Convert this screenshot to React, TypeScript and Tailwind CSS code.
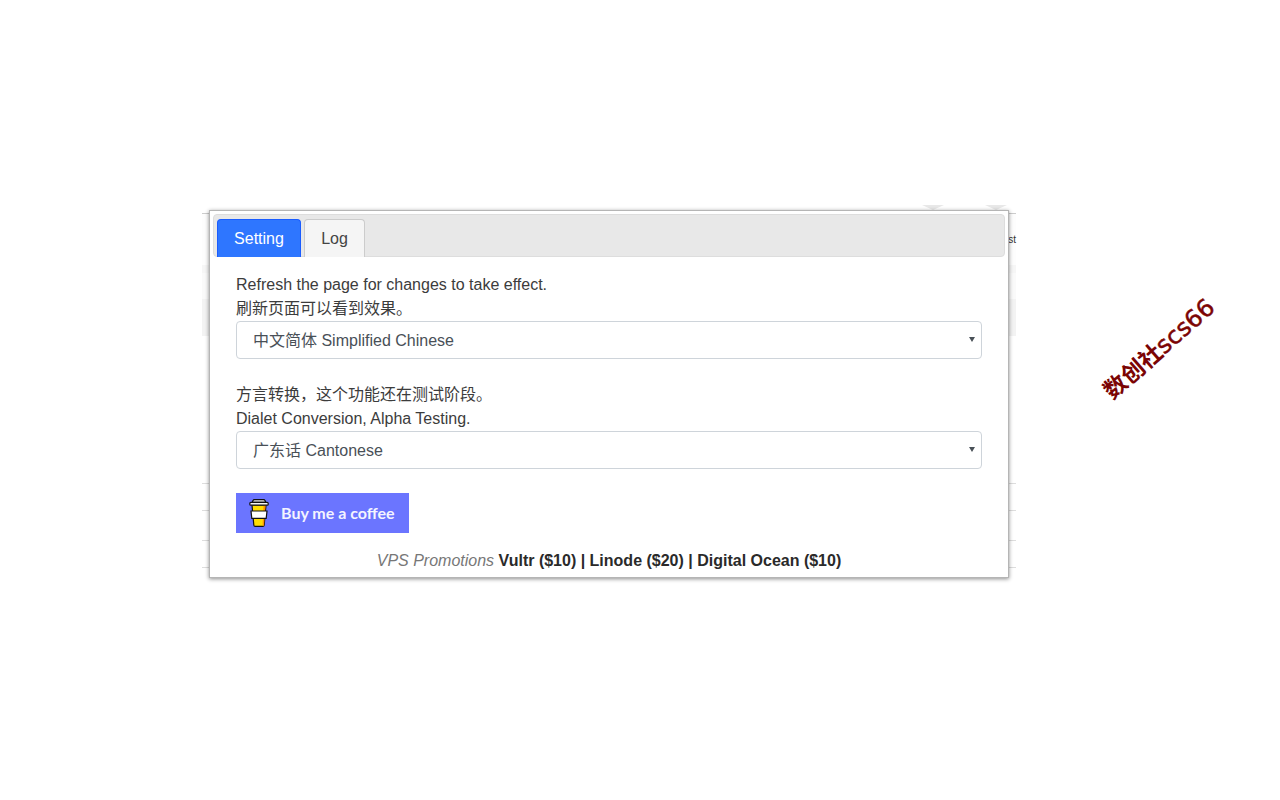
const CoffeeCup = () => (
  <svg width="20" height="28" viewBox="0 0 20 28" className="shrink-0">
    <path d="M3 6 L4.8 26 Q4.9 27.4 6.2 27.4 L13.8 27.4 Q15.1 27.4 15.2 26 L17 6 Z" fill="#ffdd00" stroke="#111" strokeWidth="1.2" />
    <path d="M14.6 6 L13.6 26.8 L15 26.8 L16.6 6 Z" fill="#ff9100" />
    <path d="M2 12 L18 12 L17.2 19.4 L2.8 19.4 Z" fill="#fff" stroke="#111" strokeWidth="1.2" />
    <path d="M3.2 3.4 L4 1.6 Q4.3 0.7 5.4 0.7 L14.6 0.7 Q15.7 0.7 16 1.6 L16.8 3.4 Z" fill="#e6e6e6" stroke="#111" strokeWidth="1.2" />
    <rect x="0.8" y="3.4" width="18.4" height="2.8" rx="1" fill="#f4f4f4" stroke="#111" strokeWidth="1.2" />
  </svg>
);

const Select = ({ value }: { value: string }) => (
  <div className="relative">
    <select className="block h-[38px] w-full appearance-none rounded border border-[#ced4da] bg-white pl-4 pt-0.5 text-[#495057]">
      <option>{value}</option>
    </select>
    <span className="pointer-events-none absolute right-[7px] top-4 border-x-[3px] border-t-[5px] border-x-transparent border-t-[#495057]" />
  </div>
);

const Backdrop = () => (
  <div className="absolute left-[202px] top-[205px] flex h-[363px] w-[814px] flex-col">
    <div className="flex h-[8px] gap-[41px] pl-[720px]">
      <div className="h-0 border-x-[11px] border-t-[5px] border-x-transparent border-t-[#e8e8e8]" />
      <div className="h-0 border-x-[11px] border-t-[5px] border-x-transparent border-t-[#e8e8e8]" />
    </div>
    <div className="flex h-[52px] items-center justify-end border-t border-[#ccc] bg-[#fdfdfd] text-[10px] text-[#333]">
      st
    </div>
    <div className="h-[8px] bg-[#f6f6f6]" />
    <div className="flex h-[63px] flex-col justify-end bg-[#fafafa]">
      <div className="h-[37px] bg-[#f3f3f3]" />
    </div>
    <div className="mt-[147px] h-[27px] border-t border-[#ddd]" />
    <div className="h-[30px] border-t border-[#ddd]" />
    <div className="h-[27px] border-t border-[#ddd]" />
    <div className="border-t border-[#ddd]" />
  </div>
);

export default function App() {
  return (
    <div className="relative h-[800px] w-full overflow-hidden bg-white pl-[209px] pt-[210px] font-['Liberation_Sans','Noto_Sans_CJK_SC',sans-serif] text-base text-[#3c3c3c]">
      <Backdrop />

      <div className="relative h-[368px] w-[800px] border border-[#b5b5b5] bg-white p-[3px] shadow-[0_1px_4px_rgba(0,0,0,0.45)]">
        <div className="flex h-[43px] items-end gap-[3px] rounded-t rounded-b-sm border border-[#ddd] bg-[#e8e8e8] px-[3px]">
          <div className="-mb-px flex h-[38px] w-[84px] items-center justify-center rounded-t border border-b-0 border-[#1a5cff] bg-[#2e76ff] text-white">
            Setting
          </div>
          <div className="-mb-px flex h-[38px] w-[61px] items-center justify-center rounded-t border border-b-0 border-[#ccc] bg-[#f5f5f5] text-[#444]">
            Log
          </div>
        </div>

        <div className="px-[23px] pt-4 leading-6">
          <p>Refresh the page for changes to take effect.</p>
          <p>刷新页面可以看到效果。</p>
          <Select value="中文简体 Simplified Chinese" />
          <p className="mt-6">方言转换，这个功能还在测试阶段。</p>
          <p>Dialet Conversion, Alpha Testing.</p>
          <Select value="广东话 Cantonese" />
          <div className="mt-6 flex h-10 w-[173px] items-center gap-[12px] bg-[#6b75ff] pl-[13px]">
            <CoffeeCup />
            <span className="font-['Lato',sans-serif] text-base font-bold text-[#f4f4ff]">Buy me a coffee</span>
          </div>
          <p className="mt-4 text-center">
            <i className="text-[#777]">VPS Promotions</i>{" "}
            <b className="text-[#2a2a2a]">Vultr ($10) | Linode ($20) | Digital Ocean ($10)</b>
          </p>
        </div>
      </div>

      {/* watermark */}
      <div className="absolute left-[1089px] top-[337px] w-[140px] -rotate-[41deg] whitespace-nowrap text-center font-['DejaVu_Sans','Noto_Sans_CJK_SC',sans-serif] text-[24px] leading-6 text-[#7b0404]">
        <span className="text-[23px] font-bold">数创社</span>
        <span className="[-webkit-text-stroke:0.5px_#7b0404]">scs66</span>
      </div>
    </div>
  );
}
